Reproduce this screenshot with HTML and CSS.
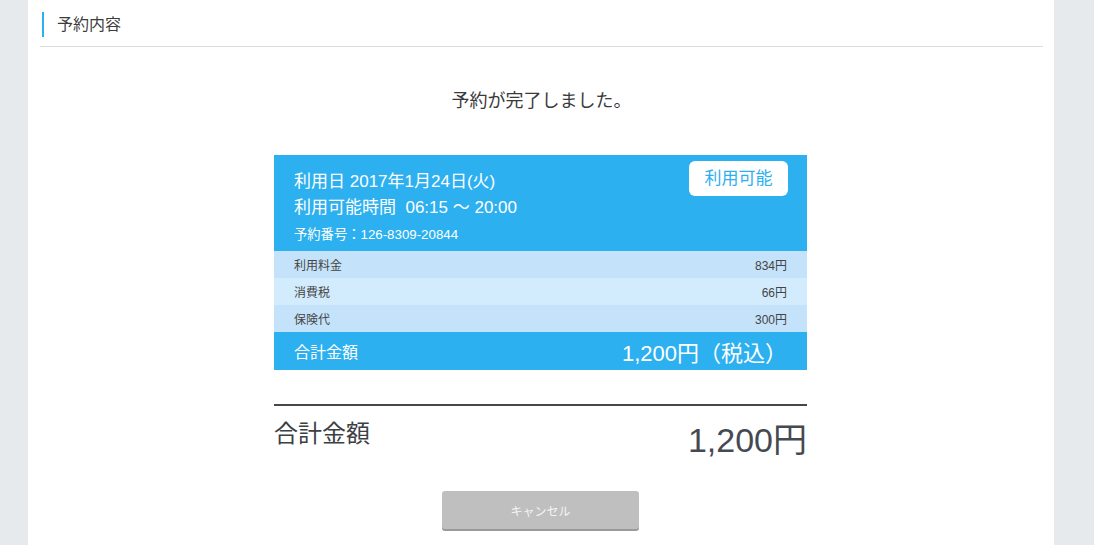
FILE: index.html
```html
<!DOCTYPE html>
<html lang="ja">
<head>
<meta charset="utf-8">
<link rel="stylesheet" href="styles.css">
</head>
<body>
<div class="page">
  <main class="panel">
    <h2 class="section-title"><span class="title-text">予約内容</span></h2>
    <p class="message">予約が完了しました。</p>
    <div class="card">
      <div class="card-head">
        <div class="head-info">
          <div class="line-lg">利用日 2017年1月24日(火)</div>
          <div class="line-lg">利用可能時間&nbsp; 06:15 〜 20:00</div>
          <div class="line-sm">予約番号：126-8309-20844</div>
        </div>
        <span class="badge">利用可能</span>
      </div>
      <div class="row row-a"><span>利用料金</span><span>834円</span></div>
      <div class="row row-b"><span>消費税</span><span>66円</span></div>
      <div class="row row-a"><span>保険代</span><span>300円</span></div>
      <div class="card-total"><span class="total-label">合計金額</span><span class="total-value">1,200円（税込）</span></div>
    </div>
    <div class="summary">
      <span class="summary-label">合計金額</span>
      <span class="summary-value">1,200円</span>
    </div>
    <div class="actions">
      <button class="cancel">キャンセル</button>
    </div>
  </main>
</div>
</body>
</html>
```

FILE: styles.css
```css
* { box-sizing: border-box; }
html, body { margin: 0; padding: 0; }
body {
  background: #e6eaed;
  font-family: "Liberation Sans", "Noto Sans CJK JP", sans-serif;
  color: #333;
}
.page {
  display: flex;
  padding-left: 28px;
  height: 545px;
  overflow: hidden;
}
.panel {
  width: 1026px;
  background: #fff;
  padding: 0 11px 0 12px;
  min-height: 545px;
}
.section-title {
  margin: 0;
  padding: 12px 0 9px 2px;
  border-bottom: 1px solid #dcdcdc;
  font-weight: normal;
  font-size: 16px;
}
.title-text {
  display: block;
  border-left: 2px solid #2db0ef;
  padding-left: 13px;
  line-height: 25px;
  color: #3c3c3c;
}
.message {
  margin: 42px 0 0;
  text-align: center;
  font-size: 18px;
  line-height: 24px;
  color: #3a3a3a;
}
.card {
  width: 533px;
  margin: 42px 0 0 234px;
}
.card-head {
  background: #2db0ef;
  color: #fff;
  display: flex;
  justify-content: space-between;
  align-items: flex-start;
  padding: 12px 19px 0 20px;
  height: 96px;
}
.head-info { padding-top: 2px; }
.line-lg { font-size: 17px; line-height: 26px; }
.line-sm { font-size: 13.3px; line-height: 20px; margin-top: 4px; }
.badge {
  margin-top: -6px;
  background: #fff;
  color: #2db0ef;
  font-size: 17px;
  line-height: 35px;
  width: 99px;
  text-align: center;
  border-radius: 6px;
}
.row {
  display: flex;
  justify-content: space-between;
  height: 27px;
  align-items: center;
  padding: 0 20px;
  font-size: 12px;
  color: #444;
}
.row-a { background: #c4e3fa; }
.row-b { background: #d2ecfd; }
.card-total {
  background: #2db0ef;
  color: #fff;
  display: flex;
  justify-content: space-between;
  align-items: center;
  height: 38px;
  padding: 0 20px;
}
.total-label { font-size: 16px; }
.total-value { font-size: 22px; }
.summary {
  width: 533px;
  margin: 34px 0 0 234px;
  border-top: 2px solid #45474b;
  display: flex;
  justify-content: space-between;
  align-items: flex-start;
  padding-top: 14px;
}
.summary-label { font-size: 24px; line-height: 28px; color: #3c3f44; }
.summary-value { font-size: 34px; line-height: 40px; color: #454a52; }
.actions {
  display: flex;
  justify-content: center;
  margin-top: 31px;
  padding-right: 2px;
}
.cancel {
  width: 197px;
  height: 38px;
  border: 0;
  border-radius: 3px;
  background: #bfbfbf;
  box-shadow: 0 2px 0 #9a9a9a;
  color: #f4f4f4;
  font-family: inherit;
  font-size: 12px;
}
```
